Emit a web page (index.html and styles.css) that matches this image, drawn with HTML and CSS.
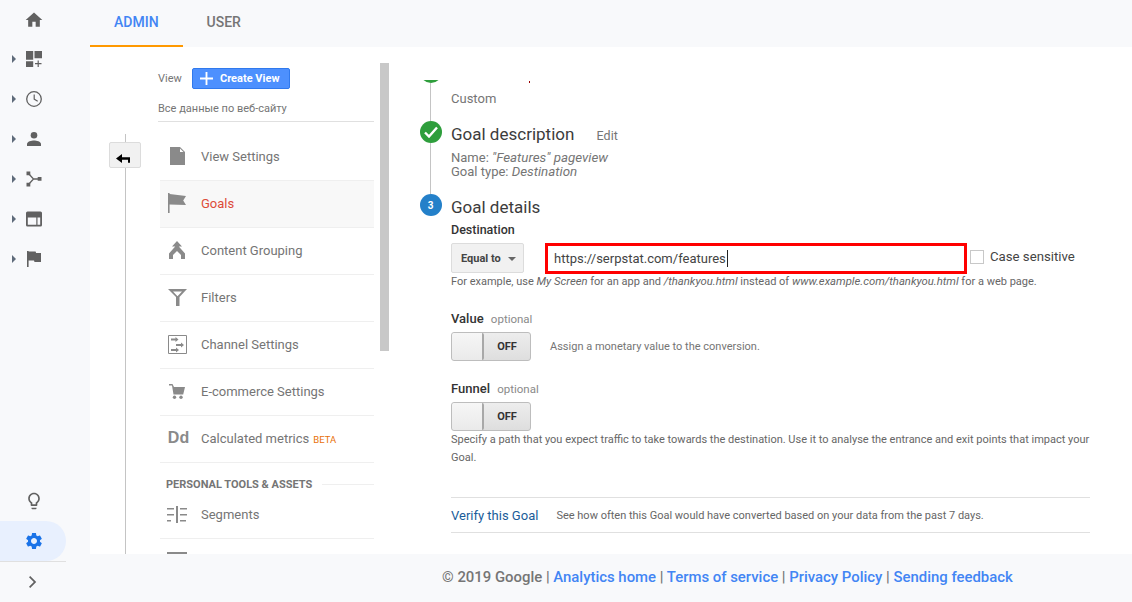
FILE: index.html
```html
<!DOCTYPE html>
<html lang="en">
<head>
<meta charset="utf-8">
<title>Goals</title>
<link rel="stylesheet" href="styles.css">
</head>
<body>
<div class="app">
  <aside class="rail">
    <div class="rail-item rail-home"><svg class="ri" viewBox="0 0 24 24"><path d="M10 20v-6h4v6h5v-8h3L12 3 2 12h3v8z"/></svg></div>
    <div class="rail-item"><i class="caret"></i><svg class="ri" viewBox="0 0 16 16"><path d="M0 0h7.200v8.800H0zM8.500 0H16v7.200H8.500zM0 10.200h7.200V16H0zM11.600 9.500h1.200v2.600h2.700v1.200h-2.700V16h-1.200v-2.700H9v-1.200h2.600z"/></svg></div>
    <div class="rail-item"><i class="caret"></i><svg class="ri" viewBox="0 0 16 16"><circle cx="8" cy="8" r="7.300" fill="none" stroke="#616161" stroke-width="1.300"/><path d="M7.600 3.500h1.200v4.300l3.200 2-.6 1-3.800-2.300z"/></svg></div>
    <div class="rail-item"><i class="caret"></i><svg class="ri ri-person" viewBox="0 0 14 14"><circle cx="7" cy="3.300" r="3.300"/><path d="M0 14v-2c0-2.500 4.500-3.500 7-3.500s7 1 7 3.500v2z"/></svg></div>
    <div class="rail-item"><i class="caret"></i><svg class="ri" viewBox="0 0 16 16"><path d="M.5.500h3.800v3.800H.5zM.5 11.700h3.800v3.800H.5zM11.700 6h3.800v3.800h-3.800z"/><path d="M2.500 2.500L7.500 8l-5 5.500M7.500 8H13" fill="none" stroke="#616161" stroke-width="1.300"/></svg></div>
    <div class="rail-item"><i class="caret"></i><svg class="ri" viewBox="0 0 16 16"><path fill-rule="evenodd" d="M1.500.500h13A1.500 1.500 0 0 1 16 2v12a1.500 1.500 0 0 1-1.500 1.500h-13A1.500 1.500 0 0 1 0 14V2A1.500 1.500 0 0 1 1.500.500zM1.800 6.500v7.200h8.500V6.500zM11.500 6.500v7.200h2.700V6.500z"/></svg></div>
    <div class="rail-item"><i class="caret"></i><svg class="ri" viewBox="0 0 14 16"><path d="M0 0h1.600v16H0zM1.600.500h7l.5 1.500H14v9H7.500L7 9.500H1.600z"/></svg></div>
    <div class="rail-item rail-bulb"><svg class="ri ri-wide" viewBox="0 0 24 24"><path d="M9 21c0 .5.400 1 1 1h4c.6 0 1-.5 1-1v-1H9v1zm3-19C8.100 2 5 5.100 5 9c0 2.400 1.200 4.500 3 5.700V17c0 .5.400 1 1 1h6c.6 0 1-.5 1-1v-2.300c1.800-1.300 3-3.400 3-5.700 0-3.900-3.100-7-7-7zm2.900 11.100l-.9.600V16h-4v-2.300l-.9-.6C7.800 12.200 7 10.700 7 9c0-2.800 2.200-5 5-5s5 2.200 5 5c0 1.700-.8 3.200-2.100 4.100z"/></svg></div>
    <div class="rail-item rail-active"><svg class="ri ri-wide" viewBox="0 0 24 24"><path d="M19.140 12.940c.04-.3.060-.61.060-.94 0-.32-.02-.64-.07-.94l2.030-1.580c.18-.14.230-.41.120-.61l-1.920-3.320c-.12-.22-.37-.29-.59-.22l-2.390.96c-.5-.38-1.030-.7-1.620-.94l-.36-2.540c-.04-.24-.24-.41-.48-.41h-3.840c-.24 0-.43.170-.47.410l-.36 2.540c-.59.240-1.130.570-1.620.940l-2.390-.96c-.22-.08-.47 0-.59.220L2.740 8.870c-.12.210-.08.470.120.610l2.030 1.580c-.05.300-.09.630-.09.940s.02.640.070.940l-2.030 1.580c-.18.140-.23.410-.12.610l1.920 3.320c.12.220.37.290.59.220l2.390-.96c.5.380 1.030.7 1.620.94l.36 2.540c.05.240.24.410.48.410h3.840c.24 0 .44-.17.47-.41l.36-2.540c.59-.24 1.130-.56 1.620-.94l2.390.96c.22.080.47 0 .59-.22l1.920-3.320c.12-.22.070-.47-.12-.61l-2.010-1.580zM12 15.600c-1.980 0-3.600-1.620-3.600-3.600s1.620-3.600 3.600-3.600 3.600 1.620 3.600 3.600-1.620 3.600-3.600 3.600z"/></svg></div>
    <div class="rail-item rail-expand"><svg class="ri-chevron" viewBox="0 0 8 12"><path d="M1.200 0L0 1.200 4.800 6 0 10.800 1.200 12l6-6z"/></svg></div>
  </aside>

  <div class="main">
    <nav class="tabs">
      <a class="tab tab-active">ADMIN</a>
      <a class="tab">USER</a>
    </nav>

    <section class="panel">
      <div class="back-col">
        <button class="back-btn"><svg viewBox="0 0 14 9" width="14" height="9"><path d="M0 4.500L6 0v3.300h8v5.400h-2V5.700H6V9z"/></svg></button>
      </div>

      <div class="nav-col">
        <div class="view-row">
          <span class="view-label">View</span>
          <button class="create-btn"><svg viewBox="0 0 14 14" width="14" height="14"><path d="M6 0h2v6h6v2H8v6H6V8H0V6h6z"/></svg><span>Create View</span></button>
        </div>
        <div class="view-name">Все данные по веб-сайту</div>
        <ul class="nav-list">
          <li class="nav-item"><span class="nav-icon"><svg viewBox="0 0 15 18" width="15" height="18"><path d="M0 0h10l5 5v13H0z"/><path fill="#fff" d="M10 1.500V5h3.500z"/></svg></span>View Settings</li>
          <li class="nav-item nav-current"><span class="nav-icon"><svg viewBox="0 0 18 20" width="18" height="20"><path d="M0 0h1.600v1l16.400 2-2.800 4.500L18 12 1.600 11.500V20H0z"/></svg></span>Goals</li>
          <li class="nav-item"><span class="nav-icon"><svg viewBox="0 0 16 18" width="16" height="18"><path d="M8 0l5 5.500h-3.200l6.200 7V18h-4v-4L8 10l-4 4v4H0v-5.500l6.200-7H3z"/></svg></span>Content Grouping</li>
          <li class="nav-item"><span class="nav-icon"><svg viewBox="0 0 19 17" width="19" height="17"><path fill-rule="evenodd" d="M0 0h19l-7.500 8v9h-3.500V8zM5 2.500h9L9.500 7.200z"/></svg></span>Filters</li>
          <li class="nav-item"><span class="nav-icon"><svg viewBox="0 0 19 19" width="19" height="19"><path fill="none" stroke="#8a8a8a" d="M.5.500h18v18H.5z"/><path d="M3 3.500h4.500V2l3 2.500-3 2.500V5.500H3zM8 9h5V7.500L16 10l-3 2.500V11H8zM3 14h5v-1.500l3 2.500-3 2.500V16H3z"/></svg></span>Channel Settings</li>
          <li class="nav-item"><span class="nav-icon"><svg viewBox="0 0 16 15" width="16" height="15"><path d="M0 0h3.500L5 3h11l-1.800 7.500H4.500L3 1.500H0z"/><circle cx="5.500" cy="13.300" r="1.700"/><circle cx="12" cy="13.300" r="1.700"/></svg></span>E-commerce Settings</li>
          <li class="nav-item"><span class="nav-icon nav-dd">Dd</span>Calculated metrics <span class="beta">BETA</span></li>
          <li class="nav-heading"><span>PERSONAL TOOLS &amp; ASSETS</span></li>
          <li class="nav-item"><span class="nav-icon"><svg viewBox="0 0 20 17" width="20" height="17"><path d="M9 0h2v17H9zM0 2h7v1.600H0zM0 8h7v1.600H0zM0 14h4v1.600H0zM13 2h7v1.600h-7zM13 8h7v1.600h-7zM13 14h6v1.600h-6z"/></svg></span>Segments</li>
          <li class="nav-item"><span class="nav-icon"><svg viewBox="0 0 20 18" width="20" height="18"><path d="M0 0h20v18H0z"/></svg></span></li>
        </ul>
      </div>

      <div class="scrollbar"></div>

      <div class="goal-view">
        <div class="goal-inner">
          <div class="step step-one">
            <div class="marker"><span class="dot dot-green"></span><span class="line"></span></div>
            <div class="step-body">
              <i class="speck"></i>
              <p class="setup-type">Custom</p>
            </div>
          </div>
          <div class="step step-two">
            <div class="marker">
              <span class="dot dot-green"><svg viewBox="0 0 14 12" width="14" height="12"><path d="M1 6.500l4 4L13 1.500" fill="none" stroke="#fff" stroke-width="2.400"/></svg></span>
              <span class="line"></span>
            </div>
            <div class="step-body step-offset">
              <h2 class="step-title">Goal description <a class="edit">Edit</a></h2>
              <p class="summary">Name: <em>"Features" pageview</em><br>Goal type: <em>Destination</em></p>
            </div>
          </div>
          <div class="step">
            <div class="marker"><span class="dot dot-blue">3</span></div>
            <div class="step-body step-offset">
              <h2 class="step-title">Goal details</h2>
              <div class="field-label dest-label">Destination</div>
              <div class="dest-row">
                <button class="match-btn">Equal to <i class="down"></i></button>
                <div class="url-box">https://serpstat.com/features<i class="cursor"></i></div>
                <label class="case"><i class="checkbox"></i>Case sensitive</label>
              </div>
              <p class="help">For example, use <em>My Screen</em> for an app and <em>/thankyou.html</em> instead of <em>www.example.com/thankyou.html</em> for a web page.</p>

              <div class="field-label opt-label">Value <span class="optional">optional</span></div>
              <div class="toggle-row">
                <div class="toggle"><span class="knob"></span><span class="off">OFF</span></div>
                <span class="toggle-note">Assign a monetary value to the conversion.</span>
              </div>

              <div class="field-label funnel-label">Funnel <span class="optional">optional</span></div>
              <div class="toggle-row">
                <div class="toggle"><span class="knob"></span><span class="off">OFF</span></div>
              </div>
              <p class="funnel-help">Specify a path that you expect traffic to take towards the destination. Use it to analyse the entrance and exit points that impact your Goal.</p>

              <div class="verify">
                <a class="verify-link">Verify this Goal</a>
                <span class="verify-note">See how often this Goal would have converted based on your data from the past 7 days.</span>
              </div>
            </div>
          </div>
        </div>
      </div>
    </section>

    <footer class="footer">© 2019 Google | <a>Analytics home</a> | <a>Terms of service</a> | <a>Privacy Policy</a> | <a>Sending feedback</a></footer>
  </div>
</div>
</body>
</html>
```

FILE: styles.css
```css
* { box-sizing: border-box; }
html, body { margin: 0; height: 100%; overflow: hidden; }
body { font-family: Roboto, "Liberation Sans", sans-serif; color: #757575; background: #f8f9fb; }
button { font-family: inherit; padding: 0; cursor: pointer; }
p, h2, ul { margin: 0; padding: 0; }

.app { display: flex; width: 1132px; height: 602px; }

.rail { width: 90px; flex: none; display: flex; flex-direction: column; }
.rail-item { height: 40px; width: 66px; flex: none; display: flex; align-items: center; justify-content: center; padding-left: 2px; position: relative; }
.rail-home { height: 39px; }
.ri { width: 16px; height: 16px; fill: #616161; }
.rail-home .ri, .ri-wide { width: 20px; height: 20px; }
.ri-person { width: 14px; height: 14px; }
.ri-chevron { width: 8px; height: 12px; fill: #616161; }
.caret { position: absolute; left: 12px; top: 50%; margin-top: -4px; border-left: 4px solid #5f6b7a; border-top: 4px solid transparent; border-bottom: 4px solid transparent; }
.rail-bulb { margin-top: auto; }
.rail-active { background: #e8f0fe; border-radius: 0 20px 20px 0; }
.rail-active .ri { fill: #1a73e8; }
.rail-expand { height: 41px; border-top: 1px solid #e0e0e0; padding-left: 0; justify-content: center; }

.main { flex: 1; min-width: 0; display: flex; flex-direction: column; }

.tabs { height: 47px; display: flex; flex: none; }
.tab { padding: 0 24px; height: 47px; line-height: 45px; font-size: 14px; font-weight: 500; color: #757575; border-bottom: 2px solid transparent; }
.tab-active { color: #4285f4; border-bottom-color: #f90; }

.panel { height: 507px; flex: none; background: #fff; display: flex; overflow: hidden; }

.back-col { width: 68px; flex: none; padding: 87px 0 0 19px; position: relative; }
.back-col::before { content: ""; position: absolute; left: 35px; top: 87px; bottom: 0; width: 1px; background: #c4c4c4; }
.back-btn { position: relative; display: block; width: 32px; height: 26px; margin-top: 8px; background: #f1f1f1; border: 1px solid #dcdcdc; border-radius: 2px; }
.back-btn svg { display: block; margin: 7px 0 0 6px; fill: #000; }

.nav-col { width: 216px; flex: none; padding-top: 21px; }
.view-row { display: flex; align-items: center; height: 21px; }
.view-label { font-size: 11px; width: 34px; }
.create-btn { width: 98px; height: 21px; display: flex; align-items: center; background: #4d90fe; border: 1px solid #3079ed; border-radius: 2px; color: #fff; font-size: 11px; font-weight: 700; padding-left: 6px; }
.create-btn svg { fill: #fff; width: 13px; height: 13px; margin: 0 7px 0 1px; flex: none; }
.view-name { font-size: 11px; line-height: 16px; margin-top: 12px; padding-bottom: 4px; border-bottom: 1px solid #e0e0e0; height: 21px; }
.nav-list { list-style: none; margin-top: 12px; padding-left: 2px; }
.nav-item { height: 47px; display: flex; align-items: center; padding-bottom: 2px; border-bottom: 1px solid #efefef; font-size: 13px; color: #757575; }
.nav-current { background: #f8f8f8; color: #dd4b39; }
.nav-icon { width: 41px; padding-left: 8px; flex: none; display: flex; align-items: center; justify-content: center; padding-right: 15px; }
.nav-icon svg { fill: #8a8a8a; flex: none; }
.nav-dd { font-family: "Liberation Sans", Arial, sans-serif; font-weight: 700; font-size: 16px; color: #8a8a8a; padding-right: 12px; padding-left: 8px; }
.beta { font-size: 9.500px; color: #e8710a; margin-left: 4px; margin-top: 2px; }
.nav-heading { height: 29px; padding: 14px 0 0 6px; display: flex; align-items: flex-start; font-size: 11px; font-weight: 700; line-height: 15px; color: #757575; }
.nav-heading::after { content: ""; flex: 1; height: 1px; background: #efefef; margin: 7px 0 0 10px; }

.scrollbar { width: 9px; height: 288px; flex: none; margin: 16px 0 0 6px; background: #c8c8c8; }

.goal-view { flex: none; width: 670px; height: 507px; margin: 33px 0 0 31px; overflow: hidden; }
.goal-inner { margin-top: -19px; }

.step { display: grid; grid-template-columns: 22px 639px; column-gap: 9px; }
.step-one { height: 60px; }
.step-two { height: 73px; }
.step-offset { padding-top: 2px; }
.marker { display: flex; flex-direction: column; align-items: center; padding-right: 1px; }
.dot { width: 22px; height: 22px; border-radius: 50%; flex: none; display: flex; align-items: center; justify-content: center; color: #fff; font-size: 10px; font-weight: 700; }
.dot-green { background: #2e9e3c; }
.dot-blue { background: #2480c9; }
.line { flex: 1; width: 1px; background: #c4c4c4; }

.step-body { position: relative; min-width: 0; }
.speck { display: block; position: absolute; left: 78px; top: 20px; width: 1px; height: 2px; background: #900; }
.setup-type { font-size: 13px; line-height: 18px; padding-top: 29px; }
.step-title { font-size: 17px; font-weight: 400; line-height: 22px; color: #3c3c3c; }
.edit { font-size: 12.500px; color: #757575; margin-left: 18px; }
.summary { font-size: 13px; line-height: 14px; margin-top: 4px; }
.summary em { font-size: 13.350px; }
.field-label { font-size: 13px; font-weight: 500; line-height: 16px; color: #333; }
.dest-label { margin-top: 4px; font-size: 12.500px; }
.dest-row { display: flex; align-items: flex-start; height: 31px; margin-top: 5px; }
.match-btn { width: 73px; height: 30px; flex: none; background: #f1f1f1; border: 1px solid #dcdcdc; border-radius: 2px; font-size: 11px; font-weight: 700; color: #444; text-align: left; padding-left: 9px; display: flex; align-items: center; white-space: nowrap; }
.down { margin-left: 7px; margin-top: 1px; border-top: 4px solid #666; border-left: 4px solid transparent; border-right: 4px solid transparent; }
.url-box { width: 422px; height: 31px; margin-left: 21px; flex: none; border: 3px solid #f00; font-size: 13px; line-height: 25px; padding-left: 6px; color: #444; display: flex; }
.cursor { width: 1px; height: 17px; margin: 4px 0 0 1px; background: #222; }
.case { display: flex; align-items: center; height: 26px; margin-left: 3px; font-size: 13.200px; color: #444; white-space: nowrap; }
.checkbox { width: 14px; height: 14px; border: 1px solid #c8c8c8; margin: 2px 6px 0 0; flex: none; }
.help { font-size: 11px; line-height: 14px; color: #666; white-space: nowrap; padding-top: 1px; height: 14px; }
.help em { font-size: 11.300px; }
.opt-label { margin-top: 23px; }
.funnel-label { margin-top: 20px; }
.optional { font-size: 11.500px; font-weight: 400; color: #8a8a8a; margin-left: 4px; }
.toggle-row { display: flex; align-items: center; height: 29px; margin-top: 5px; }
.toggle { width: 80px; height: 29px; flex: none; display: flex; border: 1px solid #bdbdbd; border-radius: 3px; background: linear-gradient(#ededed, #dedede); overflow: hidden; }
.knob { width: 32px; flex: none; background: linear-gradient(#f6f6f6, #eaeaea); border-right: 2px solid #a8a8a8; border-radius: 2px; }
.off { flex: 1; text-align: center; font-size: 11px; font-weight: 700; line-height: 27px; color: #333; }
.toggle-note { font-size: 11px; margin-left: 19px; color: #757575; }
.funnel-help { font-size: 11px; line-height: 18px; margin-top: 0; color: #666; }
.verify { margin-top: 30px; height: 36px; border-top: 1px solid #e0e0e0; border-bottom: 1px solid #e0e0e0; display: flex; align-items: center; }
.verify-link { font-size: 13px; color: #1a5c99; }
.verify-note { font-size: 11px; color: #666; margin-left: 18px; }

.footer { flex: 1; padding: 14px 0 0 352px; font-size: 14.900px; font-weight: 500; line-height: 18px; color: #757575; white-space: nowrap; }
.footer a { color: #4285f4; }
```
